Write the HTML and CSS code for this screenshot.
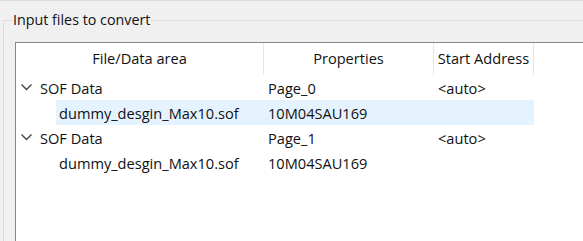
FILE: index.html
```html
<!DOCTYPE html>
<html lang="en">
<head>
    <meta charset="UTF-8">
    <title>Convert Programming File</title>
    <link rel="stylesheet" href="styles.css">
</head>
<body>
    <fieldset class="group">
        <legend>Input files to convert</legend>

        <div class="tree">
            <div class="tree-header">
                <div class="col col-name">File/Data area</div>
                <div class="col col-props">Properties</div>
                <div class="col col-addr">Start Address</div>
            </div>

            <!-- page 0 -->
            <div class="row">
                <div class="item">
                    <div class="col col-name">
                        <svg class="chevron" width="24" height="25" viewBox="0 0 24 25"><path d="M5.5 9.5 L10.5 14.5 L15.5 9.5" fill="none" stroke="#444" stroke-width="1.4"/></svg>
                        SOF Data
                    </div>
                    <div class="col col-props">Page_0</div>
                    <div class="col col-addr">&lt;auto&gt;</div>
                </div>
            </div>
            <div class="row child">
                <div class="item selected">
                    <div class="col col-name">dummy_desgin_Max10.sof</div>
                    <div class="col col-props">10M04SAU169</div>
                    <div class="col col-addr"></div>
                </div>
            </div>

            <!-- page 1 -->
            <div class="row">
                <div class="item">
                    <div class="col col-name">
                        <svg class="chevron" width="24" height="25" viewBox="0 0 24 25"><path d="M5.5 9.5 L10.5 14.5 L15.5 9.5" fill="none" stroke="#444" stroke-width="1.4"/></svg>
                        SOF Data
                    </div>
                    <div class="col col-props">Page_1</div>
                    <div class="col col-addr">&lt;auto&gt;</div>
                </div>
            </div>
            <div class="row child">
                <div class="item">
                    <div class="col col-name">dummy_desgin_Max10.sof</div>
                    <div class="col col-props">10M04SAU169</div>
                    <div class="col col-addr"></div>
                </div>
            </div>
        </div>
    </fieldset>
</body>
</html>
```

FILE: styles.css
```css
html {
    overflow: hidden;
}

body {
    margin: 0;
    background: #f0f0f0;
    border-top: 1px solid #dadada;
    height: 240px;
    display: flex;
    flex-direction: column;
    font-family: 'Open Sans', 'Noto Sans', sans-serif;
    font-size: 14.6px;
    color: #111;
}

.group {
    flex: 1;
    display: flex;
    flex-direction: column;
    min-width: 0;
    margin: 9px 0 0 3px;
    padding: 0 0 0 11px;
    border: 1px solid #dcdcdc;
    border-right: none;
    border-bottom: none;
}

.group legend {
    margin-left: -3px;
    padding: 0 1px;
    line-height: 20px;
    font-size: 14.3px;
    color: #111;
}

/* Tree view */
.tree {
    flex: 1;
    margin-top: 12px;
    background: #fff;
    border-top: 1px solid #828790;
    border-left: 1px solid #828790;
}

.tree-header {
    display: flex;
    height: 32px;
}

.tree-header .col {
    display: flex;
    align-items: center;
    justify-content: center;
    border-right: 1px solid #e5e5e5;
    box-sizing: border-box;
    padding-bottom: 2px;
}

.col-name {
    width: 248px;
}

.col-props {
    width: 170px;
}

.col-addr {
    width: 100px;
}

.row {
    display: flex;
    height: 25px;
}

.row.child {
    padding-left: 40px;
}

.item {
    display: flex;
    align-items: center;
}

.item .col {
    display: flex;
    align-items: center;
    height: 25px;
    box-sizing: border-box;
    padding-left: 4px;
}

.row .item .col-name {
    padding-left: 0;
}

.row.child .item .col-name {
    width: 208px;
    padding-left: 3px;
}

.chevron {
    flex: none;
}

.item.selected {
    background: #e5f3ff;
}
```
